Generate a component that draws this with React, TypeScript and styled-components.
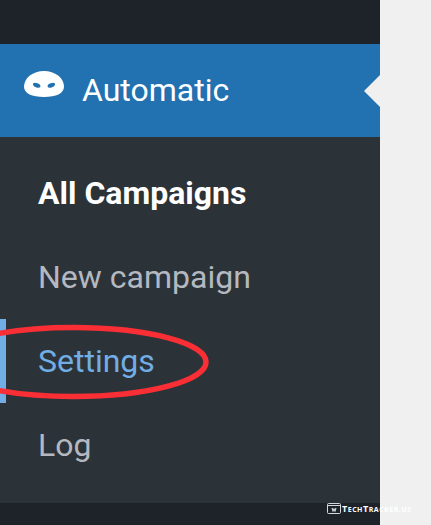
import React from "react";
import styled, { createGlobalStyle } from "styled-components";

const Global = createGlobalStyle`
  body { margin: 0; background: #f0f0f0; font-family: Roboto, sans-serif; }
`;

const Page = styled.div`
  position: relative;
  width: 431px;
  height: 525px;
  overflow: hidden;
  background: #f0f0f0;
`;

const Sidebar = styled.nav`
  display: flex;
  flex-direction: column;
  box-sizing: border-box;
  width: 380px;
  height: 525px;
  padding-top: 44px;
  background: #1d2329;
`;

const MenuHead = styled.a`
  display: flex;
  align-items: center;
  height: 93px;
  padding-left: 24px;
  background: #2271b1;
  color: #fff;
  font-size: 32px;
  line-height: 42px;
`;

const MenuTitle = styled.span`
  padding-bottom: 2px;
`;

const MaskIcon = styled.svg`
  width: 40px;
  height: 26px;
  margin: 0 18px 13px 0;
`;

const Pointer = styled.svg`
  width: 16px;
  height: 32px;
  margin-left: auto;
`;

const Submenu = styled.ul`
  display: flex;
  flex-direction: column;
  height: 366px;
  margin: 0;
  padding: 14px 0;
  box-sizing: border-box;
  background: #2c3338;
  list-style: none;
`;

const Item = styled.li<{ $state?: "current" | "hover" }>`
  box-sizing: border-box;
  height: 84px;
  padding-left: 38px;
  color: ${(p) => (p.$state === "current" ? "#fff" : p.$state === "hover" ? "#72aee6" : "#b4b9c1")};
  font-size: 32px;
  font-weight: ${(p) => (p.$state === "current" ? 700 : 400)};
  line-height: 84px;
  box-shadow: ${(p) => (p.$state === "hover" ? "inset 6px 0 0 #72aee6" : "none")};
`;

const Marker = styled.svg`
  position: absolute;
  left: 0;
  top: 320px;
  width: 215px;
  height: 84px;
`;

const Credit = styled.div`
  position: absolute;
  left: 327px;
  top: 502px;
  display: flex;
  align-items: center;
  gap: 1px;
  height: 13px;
  color: #fff;
  font-family: "Open Sans", sans-serif;
  font-size: 9px;
  font-weight: 700;
  line-height: 13px;
  letter-spacing: 0.5px;
  white-space: nowrap;
`;

const CreditText = styled.span`
  padding-top: 1px;
`;

const Small = styled.span`
  font-size: 7px;
`;

export default function App() {
  return (
    <Page>
      <Global />
      <Sidebar>
        <MenuHead>
          <MaskIcon viewBox="0 0 40 26">
            <path
              d="M20 0C31 0 40 7 40 15.5C40 22.500 32 26 20 26S0 22.500 0 15.500C0 7 9 0 20 0Z"
              fill="#fff"
            />
            <ellipse cx="12.700" cy="14.300" rx="3.900" ry="2.100" transform="rotate(22 12.700 14.300)" fill="#2271b1" />
            <ellipse cx="27.300" cy="14.300" rx="3.900" ry="2.100" transform="rotate(-22 27.300 14.300)" fill="#2271b1" />
          </MaskIcon>
          <MenuTitle>Automatic</MenuTitle>
          <Pointer viewBox="0 0 16 32">
            <path d="M16 0L0 16L16 32Z" fill="#f0f0f0" />
          </Pointer>
        </MenuHead>
        <Submenu>
          <Item $state="current">All Campaigns</Item>
          <Item>New campaign</Item>
          <Item $state="hover">Settings</Item>
          <Item>Log</Item>
        </Submenu>
      </Sidebar>
      <Marker viewBox="0 0 215 84">
        <ellipse cx="73.500" cy="42" rx="132.500" ry="34.500" fill="none" stroke="#f92f35" strokeWidth="5.500" />
      </Marker>
      <Credit>
        <svg width="14" height="11" viewBox="0 0 14 11" fill="none" stroke="#d5d8da">
          <rect x=".5" y=".5" width="13" height="10" rx="1" />
          <path d="M1 2.500H13" />
          <path d="M5 5L6 8L7 6L8 8L9 5" strokeWidth="1.200" />
        </svg>
        <CreditText>
          T<Small>ECH</Small>T<Small>RACKER.US</Small>
        </CreditText>
      </Credit>
    </Page>
  );
}
